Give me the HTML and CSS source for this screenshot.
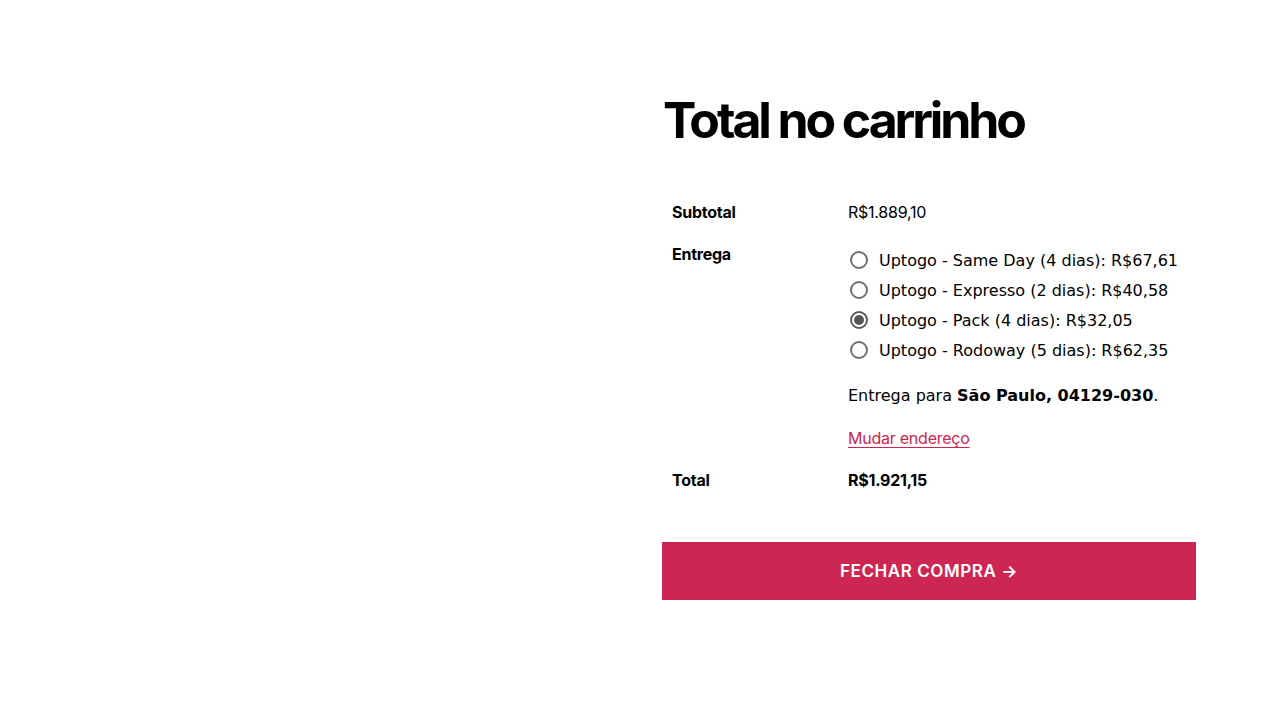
FILE: index.html
```html
<!DOCTYPE html>
<html lang="pt-BR">
<head>
<meta charset="utf-8">
<title>Total no carrinho</title>
<link rel="stylesheet" href="styles.css">
</head>
<body>
<div class="page">
  <div class="spacer"></div>
  <section class="cart-totals">
    <h2 class="title">Total no carrinho</h2>
    <table class="totals">
      <tr>
        <th>Subtotal</th>
        <td>R$1.889,10</td>
      </tr>
      <tr>
        <th>Entrega</th>
        <td>
          <ul class="methods">
            <li><span class="radio"></span><span class="opt">Uptogo - Same Day (4 dias): R$67,61</span></li>
            <li><span class="radio"></span><span class="opt">Uptogo - Expresso (2 dias): R$40,58</span></li>
            <li><span class="radio checked"></span><span class="opt">Uptogo - Pack (4 dias): R$32,05</span></li>
            <li><span class="radio"></span><span class="opt">Uptogo - Rodoway (5 dias): R$62,35</span></li>
          </ul>
          <p class="destination">Entrega para <strong>São Paulo, 04129-030</strong>.</p>
          <a class="change" href="#">Mudar endereço</a>
        </td>
      </tr>
      <tr class="order-total">
        <th>Total</th>
        <td><strong>R$1.921,15</strong></td>
      </tr>
    </table>
    <a class="checkout" href="#">FECHAR COMPRA →</a>
  </section>
</div>
</body>
</html>
```

FILE: styles.css
```css
html, body {
  margin: 0;
  padding: 0;
  background: #ffffff;
}

body {
  font-family: "Inter", "Liberation Sans", sans-serif;
  color: #000000;
  font-size: 16px;
}

.page {
  display: flex;
  padding: 95px 84px 0 0;
}

.spacer {
  flex: 1;
}

.cart-totals {
  width: 534px;
}

.title {
  margin: 0 0 46px 1px;
  font-size: 50px;
  line-height: 1;
  font-weight: 700;
  letter-spacing: -0.062em;
}

.totals {
  width: 100%;
  border-collapse: collapse;
  letter-spacing: -0.015em;
}

.totals th,
.totals td {
  padding: 9px 10px;
  line-height: 24px;
  text-align: left;
  vertical-align: top;
}

.totals th {
  width: 156px;
  font-weight: 700;
}

.methods {
  list-style: none;
  margin: 3px 0 0 0;
  padding: 0;
  font-family: "DejaVu Sans", sans-serif;
  letter-spacing: 0;
}

.methods li {
  display: flex;
  align-items: center;
  height: 30px;
}

.radio {
  box-sizing: border-box;
  width: 18px;
  height: 18px;
  margin-left: 2px;
  border: 2px solid #707070;
  border-radius: 50%;
  display: flex;
  align-items: center;
  justify-content: center;
  flex-shrink: 0;
}

.radio.checked {
  border-color: #5a5a5a;
}

.radio.checked::after {
  content: "";
  width: 10px;
  height: 10px;
  border-radius: 50%;
  background: #555555;
}

.opt {
  margin-left: 11px;
  line-height: normal;
}

.destination {
  margin: 19px 0 18px 0;
  font-family: "DejaVu Sans", sans-serif;
  letter-spacing: 0;
}

.destination strong {
  font-weight: 700;
}

.change {
  display: block;
  width: max-content;
  color: #cd2653;
  text-decoration: underline;
  text-underline-offset: 3px;
  text-decoration-thickness: 1px;
}

.order-total td strong {
  font-weight: 700;
}

.checkout {
  display: flex;
  align-items: center;
  justify-content: center;
  height: 58px;
  margin-top: 41px;
  background: #cd2653;
  color: #ffffff;
  font-size: 17px;
  font-weight: 600;
  letter-spacing: 0.0333em;
  text-decoration: none;
}
```
